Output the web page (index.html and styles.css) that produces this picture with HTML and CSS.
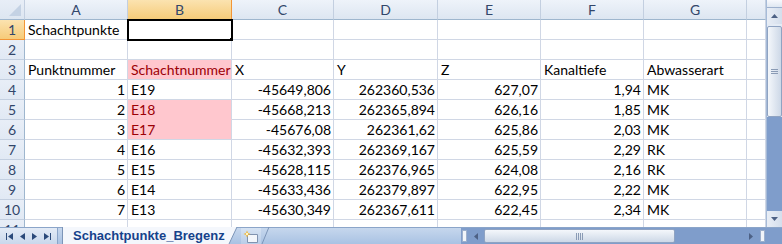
FILE: index.html
```html
<!DOCTYPE html>
<html lang="de">
<head>
    <meta charset="UTF-8">
    <title>Schachtpunkte_Bregenz</title>
    <link rel="stylesheet" href="styles.css">
</head>
<body>
    <div class="window">
        <div class="main">
            <div class="grid-wrap">
                <table class="sheet">
                    <colgroup>
                        <col class="c-hdr">
                        <col class="c-a"><col class="c-b"><col class="c-c"><col class="c-d">
                        <col class="c-e"><col class="c-f"><col class="c-g"><col class="c-h">
                    </colgroup>
                    <thead>
                        <tr>
                            <th class="corner"></th>
                            <th>A</th><th class="sel">B</th><th>C</th><th>D</th>
                            <th>E</th><th>F</th><th>G</th><th></th>
                        </tr>
                    </thead>
                    <tbody>
                        <tr>
                            <th class="sel">1</th>
                            <td>Schachtpunkte</td><td class="active"></td><td></td><td></td><td></td><td></td><td></td><td></td>
                        </tr>
                        <tr>
                            <th>2</th>
                            <td></td><td></td><td></td><td></td><td></td><td></td><td></td><td></td>
                        </tr>
                        <tr>
                            <th>3</th>
                            <td>Punktnummer</td><td class="bad">Schachtnummer</td><td>X</td><td>Y</td><td>Z</td><td>Kanaltiefe</td><td>Abwasserart</td><td></td>
                        </tr>
                        <tr>
                            <th>4</th>
                            <td class="num">1</td><td>E19</td><td class="num">-45649,806</td><td class="num">262360,536</td><td class="num">627,07</td><td class="num">1,94</td><td>MK</td><td></td>
                        </tr>
                        <tr>
                            <th>5</th>
                            <td class="num">2</td><td class="bad joined">E18</td><td class="num">-45668,213</td><td class="num">262365,894</td><td class="num">626,16</td><td class="num">1,85</td><td>MK</td><td></td>
                        </tr>
                        <tr>
                            <th>6</th>
                            <td class="num">3</td><td class="bad">E17</td><td class="num">-45676,08</td><td class="num">262361,62</td><td class="num">625,86</td><td class="num">2,03</td><td>MK</td><td></td>
                        </tr>
                        <tr>
                            <th>7</th>
                            <td class="num">4</td><td>E16</td><td class="num">-45632,393</td><td class="num">262369,167</td><td class="num">625,59</td><td class="num">2,29</td><td>RK</td><td></td>
                        </tr>
                        <tr>
                            <th>8</th>
                            <td class="num">5</td><td>E15</td><td class="num">-45628,115</td><td class="num">262376,965</td><td class="num">624,08</td><td class="num">2,16</td><td>RK</td><td></td>
                        </tr>
                        <tr>
                            <th>9</th>
                            <td class="num">6</td><td>E14</td><td class="num">-45633,436</td><td class="num">262379,897</td><td class="num">622,95</td><td class="num">2,22</td><td>MK</td><td></td>
                        </tr>
                        <tr>
                            <th>10</th>
                            <td class="num">7</td><td>E13</td><td class="num">-45630,349</td><td class="num">262367,611</td><td class="num">622,45</td><td class="num">2,34</td><td>MK</td><td></td>
                        </tr>
                        <tr>
                            <th>11</th>
                            <td></td><td></td><td></td><td></td><td></td><td></td><td></td><td></td>
                        </tr>
                    </tbody>
                </table>
            </div>

            <!-- vertical scrollbar -->
            <div class="vscroll">
                <div class="split-v"></div>
                <div class="sb-btn">
                    <svg width="7" height="4" viewBox="0 0 7 4"><path d="M0 4 L3.5 0 L7 4 Z" fill="#4d6185"/></svg>
                </div>
                <div class="v-thumb">
                    <svg width="7" height="6" viewBox="0 0 7 6"><path d="M0 0.5h7M0 2.5h7M0 4.5h7" stroke="#8a9bb5" stroke-width="1"/></svg>
                </div>
                <div class="v-track"></div>
                <div class="sb-btn">
                    <svg width="7" height="4" viewBox="0 0 7 4"><path d="M0 0 L3.5 4 L7 0 Z" fill="#4d6185"/></svg>
                </div>
            </div>
        </div>

        <div class="bottom">
            <div class="tab-nav">
                <svg width="7" height="7" viewBox="0 0 7 7"><path d="M0.5 0v7" stroke="#2b4a7a"/><path d="M7 0 L2 3.5 L7 7 Z" fill="#2b4a7a"/></svg>
                <svg width="5" height="7" viewBox="0 0 5 7"><path d="M5 0 L0 3.5 L5 7 Z" fill="#2b4a7a"/></svg>
                <svg width="5" height="7" viewBox="0 0 5 7"><path d="M0 0 L5 3.5 L0 7 Z" fill="#2b4a7a"/></svg>
                <svg width="7" height="7" viewBox="0 0 7 7"><path d="M0 0 L5 3.5 L0 7 Z" fill="#2b4a7a"/><path d="M6.5 0v7" stroke="#2b4a7a"/></svg>
            </div>
            <div class="sheet-tab">Schachtpunkte_Bregenz</div>
            <svg class="tab-edge" width="14" height="17" viewBox="0 0 14 17">
                <path d="M0 0 H10 L2 17 H0 Z" fill="#f4f7fc"/>
                <path d="M10 0 L2 17" stroke="#7c95b8" stroke-width="1"/>
            </svg>
            <div class="new-tab">
                <svg width="16" height="13" viewBox="0 0 16 13">
                    <path d="M4.5 4.5 H14.5 V12.5 H4.5 Z" fill="#f3f6fb" stroke="#8093b0"/>
                    <path d="M4 0.5 L5 3 L7.5 4 L5 5 L4 7.5 L3 5 L0.5 4 L3 3 Z" fill="#f2b630"/>
                    <circle cx="4" cy="4" r="1.2" fill="#fff6c8"/>
                </svg>
            </div>
            <svg class="tab-edge" width="10" height="17" viewBox="0 0 10 17">
                <path d="M8 0 L1 17" stroke="#7c95b8" stroke-width="1"/>
            </svg>
            <div class="tab-space"></div>

            <!-- horizontal scrollbar -->
            <div class="hscroll">
                <div class="split-h"></div>
                <div class="sb-btn h">
                    <svg width="4" height="7" viewBox="0 0 4 7"><path d="M4 0 L0 3.5 L4 7 Z" fill="#4d6185"/></svg>
                </div>
                <div class="h-thumb">
                    <svg width="7" height="7" viewBox="0 0 7 7"><path d="M0.5 0v7M2.5 0v7M4.5 0v7M6.5 0v7" stroke="#8a9bb5" stroke-width="1"/></svg>
                </div>
                <div class="h-track"></div>
                <div class="sb-btn h">
                    <svg width="4" height="7" viewBox="0 0 4 7"><path d="M0 0 L4 3.5 L0 7 Z" fill="#4d6185"/></svg>
                </div>
                <div class="split-h"></div>
            </div>
            <div class="corner-box"></div>
        </div>
    </div>
</body>
</html>
```

FILE: styles.css
```css
body {
    margin: 0;
    background: #ffffff;
    font-family: Lato, "Open Sans", sans-serif;
}
.window {
    width: 782px;
    height: 244px;
    display: flex;
    flex-direction: column;
    overflow: hidden;
}
.main {
    height: 227px;
    display: flex;
}
.grid-wrap {
    width: 766px;
    overflow: hidden;
}

/* grid */
.sheet {
    table-layout: fixed;
    width: 766px;
    border-collapse: separate;
    border-spacing: 0;
    font-size: 14px;
    color: #000;
}
.c-hdr { width: 25px; }
.c-a { width: 103px; }
.c-b { width: 104px; }
.c-c { width: 102px; }
.c-d { width: 104px; }
.c-e { width: 103px; }
.c-f { width: 103px; }
.c-g { width: 103px; }
.c-h { width: 19px; }

.sheet td,
.sheet th {
    height: 20px;
    box-sizing: border-box;
    padding: 0 2px 0 3px;
    line-height: 19px;
    white-space: nowrap;
    overflow: hidden;
    border-right: 1px solid #d0d7e5;
    border-bottom: 1px solid #d0d7e5;
}
.sheet th {
    font-weight: normal;
    font-size: 14px;
    color: #32466a;
    text-align: center;
    padding: 0;
    background: linear-gradient(#eef3fa, #dde6f1);
    border-right: 1px solid #c3cfe0;
    border-bottom: 1px solid #c3cfe0;
}
.sheet thead th {
    border-bottom: 1px solid #9eb6ce;
}
.sheet tbody th {
    border-right: 1px solid #9eb6ce;
    background: linear-gradient(#e8eef7, #e1e9f4);
}
.sheet th.sel {
    background: linear-gradient(#fbe3b0, #f6cb79);
    border-right-color: #f29536;
    border-bottom-color: #f29536;
}
.sheet th.corner {
    position: relative;
    background: linear-gradient(#e8eef7, #dde6f1);
}
.sheet th.corner::after {
    content: "";
    position: absolute;
    right: 3px;
    bottom: 3px;
    width: 0;
    height: 0;
    border-left: 12px solid transparent;
    border-bottom: 12px solid #c4d2e4;
}
.sheet td.num {
    text-align: right;
}
.sheet td.bad {
    background: #ffc7ce;
    color: #9c0006;
}
.sheet td.joined {
    border-bottom-color: #ffc7ce;
}
.sheet td.active {
    position: relative;
    outline: 2px solid #000;
    outline-offset: -1px;
}
.sheet td.active::after {
    content: "";
    position: absolute;
    right: -3px;
    bottom: -3px;
    width: 5px;
    height: 5px;
    background: #000;
    border: 1px solid #fff;
    box-sizing: border-box;
    z-index: 2;
}

/* scrollbars */
.vscroll {
    width: 16px;
    display: flex;
    flex-direction: column;
    background: #e4ebf5;
    border-left: 1px solid #a6bbd8;
    box-sizing: border-box;
}
.split-v {
    height: 7px;
    background: linear-gradient(#f7f9fd, #dfe7f2);
    border-bottom: 1px solid #9db0cd;
    position: relative;
}
.sb-btn {
    height: 16px;
    display: flex;
    align-items: center;
    justify-content: center;
    background: linear-gradient(90deg, #e9eef6, #d4deec);
}
.v-thumb {
    height: 91px;
    margin-top: 2px;
    display: flex;
    align-items: center;
    justify-content: center;
    background: linear-gradient(90deg, #f4f7fb, #cdd8e7);
    border: 1px solid #8fa3c2;
    border-radius: 2px;
    box-sizing: border-box;
}
.v-track {
    flex: 1;
    background: #7f9dcb;
}

.bottom {
    height: 17px;
    display: flex;
    align-items: stretch;
    background: linear-gradient(#c6d7ed, #a9c2e3);
    border-top: 1px solid #8ba5c9;
    box-sizing: border-box;
    font-family: "Liberation Sans", Arial, sans-serif;
}
.tab-nav {
    width: 58px;
    display: flex;
    align-items: center;
    justify-content: space-around;
    padding: 0 3px;
    box-sizing: border-box;
    background: linear-gradient(#e3ebf6, #c9d8ec);
    border-right: 1px solid #8ba5c9;
}
.sheet-tab {
    margin-left: 4px;
    padding: 0 2px 0 10px;
    display: flex;
    align-items: center;
    background: #f4f7fc;
    border-left: 1px solid #7c95b8;
    margin-top: -1px;
    font-size: 13px;
    font-weight: bold;
    color: #15428b;
}
.tab-edge {
    display: block;
    margin-top: -1px;
}
.new-tab {
    width: 20px;
    display: flex;
    align-items: center;
    justify-content: center;
    background: linear-gradient(#d6e3f3, #b9cde8);
}
.tab-space {
    flex: 1;
}
.hscroll {
    width: 305px;
    display: flex;
    align-items: stretch;
    background: #7f9dcb;
}
.split-h {
    width: 5px;
    margin: 2px 1px;
    background: #f1f5fa;
    border: 1px solid #9db0cd;
    box-sizing: border-box;
}
.sb-btn.h {
    width: 16px;
    height: auto;
    background: transparent;
}
.h-thumb {
    width: 191px;
    display: flex;
    align-items: center;
    justify-content: center;
    margin: 1px 0;
    background: linear-gradient(#f4f7fb, #cdd8e7);
    border: 1px solid #8fa3c2;
    border-radius: 2px;
    box-sizing: border-box;
}
.h-track {
    flex: 1;
}
.corner-box {
    width: 16px;
    background: #7f9dcb;
}
```
